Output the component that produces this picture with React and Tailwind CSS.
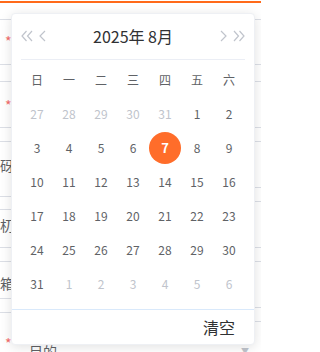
import React from "react";

const weekDays = ["日", "一", "二", "三", "四", "五", "六"];

// 2025年8月，前后补齐
const days = [
  [27, 0], [28, 0], [29, 0], [30, 0], [31, 0], [1, 1], [2, 1],
  [3, 1], [4, 1], [5, 1], [6, 1], [7, 2], [8, 1], [9, 1],
  [10, 1], [11, 1], [12, 1], [13, 1], [14, 1], [15, 1], [16, 1],
  [17, 1], [18, 1], [19, 1], [20, 1], [21, 1], [22, 1], [23, 1],
  [24, 1], [25, 1], [26, 1], [27, 1], [28, 1], [29, 1], [30, 1],
  [31, 1], [1, 0], [2, 0], [3, 0], [4, 0], [5, 0], [6, 0],
];

const DoubleLeft = () => (
  <svg width="12" height="12" viewBox="0 0 12 12" fill="none" stroke="#c0c4cc" strokeWidth="1.2">
    <path d="M5.5 1 L1 6 L5.5 11" />
    <path d="M11 1 L6.5 6 L11 11" />
  </svg>
);

const Left = () => (
  <svg width="7" height="12" viewBox="0 0 7 12" fill="none" stroke="#c0c4cc" strokeWidth="1.2">
    <path d="M6 1 L1 6 L6 11" />
  </svg>
);

const Right = () => (
  <svg width="7" height="12" viewBox="0 0 7 12" fill="none" stroke="#c0c4cc" strokeWidth="1.2">
    <path d="M1 1 L6 6 L1 11" />
  </svg>
);

const DoubleRight = () => (
  <svg width="12" height="12" viewBox="0 0 12 12" fill="none" stroke="#c0c4cc" strokeWidth="1.2">
    <path d="M1 1 L5.5 6 L1 11" />
    <path d="M6.5 1 L11 6 L6.5 11" />
  </svg>
);

const Star = () => <span className="text-[#f56c6c]">*</span>;

const App = () => {
  return (
    <div
      className="relative w-[261px] h-[352px] overflow-hidden bg-white"
      style={{ fontFamily: '"Noto Sans CJK SC", "Noto Sans", sans-serif' }}
    >
      {/* 背景表单 */}
      <div className="mt-[1px] h-[2px] bg-[#ff6a1a]" />
      <div className="flex text-[14px] leading-[14px] text-[#606266]">
        {/* 左侧露出部分 */}
        <div className="w-[11px] flex flex-col">
          <div className="h-[17px] border-b border-[#dcdfe6]" />
          <div className="h-[45px] border-b border-[#dcdfe6] pt-[14px] pl-[5px]"><Star /></div>
          <div className="h-[17px] border-b border-[#dcdfe6]" />
          <div className="h-[46px] border-b border-[#dcdfe6] pt-[16px] pl-[5px]"><Star /></div>
          <div className="h-[14px] border-b border-[#dcdfe6]" />
          <div className="h-[55px] border-b border-[#dcdfe6] pt-[16px] whitespace-nowrap">砑</div>
          <div className="h-[13px] border-b border-[#dcdfe6]" />
          <div className="h-[38px] border-b border-[#dcdfe6] pt-[8px] whitespace-nowrap">朷</div>
          <div className="h-[14px] border-b border-[#dcdfe6]" />
          <div className="h-[37px] border-b border-[#dcdfe6] pt-[14px] whitespace-nowrap">箱</div>
          <div className="h-[14px] border-b border-[#dcdfe6]" />
          <div className="pt-[23px] pl-[5px]"><Star /></div>
        </div>
        {/* 中间 */}
        <div className="flex-1 pt-[341px]">
          <div className="flex items-center justify-between pl-[18px] pr-[6px]">
            <span>目的</span>
            <span className="text-[8px] text-[#c0c4cc]">▼</span>
          </div>
        </div>
        {/* 右侧露出部分 */}
        <div className="w-[6px] flex flex-col">
          <div className="h-[17px] border-b border-[#dcdfe6]" />
          <div className="h-[45px] border-b border-[#dcdfe6]" />
          <div className="h-[17px] border-b border-[#dcdfe6]" />
          <div className="h-[46px] border-b border-[#dcdfe6]" />
          <div className="h-[14px] border-b border-[#dcdfe6]" />
          <div className="h-[46px] border-b border-[#dcdfe6]" />
          <div className="h-[14px] border-b border-[#dcdfe6]" />
          <div className="h-[46px] border-b border-[#dcdfe6]" />
          <div className="h-[14px] border-b border-[#dcdfe6]" />
          <div className="h-[46px] border-b border-[#dcdfe6]" />
          <div className="h-[14px] border-b border-[#dcdfe6]" />
        </div>
      </div>

      {/* 日期弹层 */}
      <div className="absolute left-[11px] top-[13px] w-[244px] h-[332px] bg-white rounded-[4px] border border-[#eef0f4] shadow-[0_2px_12px_rgba(0,0,0,0.12)] flex flex-col">
        <div className="px-[9px]">
          <div className="h-[46px] flex items-center border-b border-[#ebeef5]">
            <div className="flex items-center gap-[6px] pb-[2px]">
              <DoubleLeft />
              <Left />
            </div>
            <div className="flex-1 text-center text-[16px] text-[#303133] pb-[2px]">2025年 8月</div>
            <div className="flex items-center gap-[6px] pb-[2px]">
              <Right />
              <DoubleRight />
            </div>
          </div>
          <div className="grid grid-cols-7 mt-[3px] text-[12px]">
            {weekDays.map((d) => (
              <div key={d} className="h-[34px] flex items-center justify-center text-[#606266]">
                {d}
              </div>
            ))}
            {days.map(([n, t], i) => (
              <div key={i} className="h-[34px] flex items-center justify-center">
                {t === 2 ? (
                  <span className="w-[32px] h-[32px] rounded-full bg-[#ff6d2a] text-white font-bold text-[13px] flex items-center justify-center">
                    {n}
                  </span>
                ) : (
                  <span className={t === 1 ? "text-[#606266]" : "text-[#c0c4cc]"}>{n}</span>
                )}
              </div>
            ))}
          </div>
        </div>
        <div className="mt-auto h-[35px] border-t border-[#d9e9fb] flex items-center justify-end pr-[19px] text-[16px] text-[#303133]">
          清空
        </div>
      </div>
    </div>
  );
};

export default App;
